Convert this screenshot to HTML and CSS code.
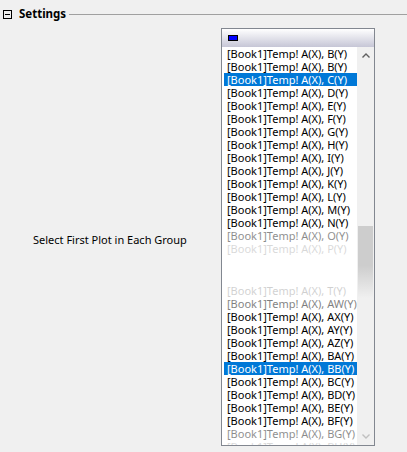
FILE: index.html
```html
<!DOCTYPE html>
<html>
<head>
<meta charset="utf-8">
<link rel="stylesheet" href="styles.css">
</head>
<body>
<div class="page">
  <div class="section-head">
    <span class="collapse-icon"><span class="minus"></span></span>
    <span class="section-title">Settings</span>
    <span class="section-line"></span>
  </div>
  <div class="section-body">
    <div class="field-label">Select First Plot in Each Group</div>
    <div class="listbox">
      <div class="list-header"><span class="swatch"></span></div>
      <div class="list-main">
        <div class="list-rows">
          <div class="row">[Book1]Temp! A(X), B(Y)</div>
          <div class="row">[Book1]Temp! A(X), B(Y)</div>
          <div class="row selected">[Book1]Temp! A(X), C(Y)</div>
          <div class="row">[Book1]Temp! A(X), D(Y)</div>
          <div class="row">[Book1]Temp! A(X), E(Y)</div>
          <div class="row">[Book1]Temp! A(X), F(Y)</div>
          <div class="row">[Book1]Temp! A(X), G(Y)</div>
          <div class="row">[Book1]Temp! A(X), H(Y)</div>
          <div class="row">[Book1]Temp! A(X), I(Y)</div>
          <div class="row">[Book1]Temp! A(X), J(Y)</div>
          <div class="row">[Book1]Temp! A(X), K(Y)</div>
          <div class="row">[Book1]Temp! A(X), L(Y)</div>
          <div class="row">[Book1]Temp! A(X), M(Y)</div>
          <div class="row">[Book1]Temp! A(X), N(Y)</div>
          <div class="row fade-1">[Book1]Temp! A(X), O(Y)</div>
          <div class="row fade-2">[Book1]Temp! A(X), P(Y)</div>
          <div class="row-gap"></div>
          <div class="row fade-3">[Book1]Temp! A(X), T(Y)</div>
          <div class="row fade-4">[Book1]Temp! A(X), AW(Y)</div>
          <div class="row">[Book1]Temp! A(X), AX(Y)</div>
          <div class="row">[Book1]Temp! A(X), AY(Y)</div>
          <div class="row">[Book1]Temp! A(X), AZ(Y)</div>
          <div class="row">[Book1]Temp! A(X), BA(Y)</div>
          <div class="row selected">[Book1]Temp! A(X), BB(Y)</div>
          <div class="row">[Book1]Temp! A(X), BC(Y)</div>
          <div class="row">[Book1]Temp! A(X), BD(Y)</div>
          <div class="row">[Book1]Temp! A(X), BE(Y)</div>
          <div class="row">[Book1]Temp! A(X), BF(Y)</div>
          <div class="row fade-1">[Book1]Temp! A(X), BG(Y)</div>
          <div class="row fade-2">[Book1]Temp! A(X), BH(Y)</div>
        </div>
        <div class="scrollbar">
          <div class="sb-btn">
            <svg width="8" height="5" viewBox="0 0 8 5"><path d="M0.5 4.5 L4 1 L7.5 4.5" fill="none" stroke="#606060" stroke-width="1.4"/></svg>
          </div>
          <div class="sb-track"><div class="sb-thumb"></div></div>
          <div class="sb-btn">
            <svg width="8" height="5" viewBox="0 0 8 5"><path d="M0.5 0.5 L4 4 L7.5 0.5" fill="none" stroke="#c0c0c0" stroke-width="1.4"/></svg>
          </div>
        </div>
      </div>
    </div>
  </div>
</div>
</body>
</html>
```

FILE: styles.css
```css
html, body {
  margin: 0;
  padding: 0;
  background: #f0f0f0;
}
.page {
  width: 407px;
  height: 452px;
  overflow: hidden;
  font-family: "Noto Sans", "Open Sans", sans-serif;
  font-size: 11px;
  color: #000;
}
.section-head {
  display: flex;
  align-items: center;
  height: 14px;
  padding-top: 7px;
  padding-left: 3px;
}
.collapse-icon {
  width: 7px;
  height: 7px;
  border: 1px solid #000;
  display: flex;
  align-items: center;
  justify-content: center;
  background: #f0f0f0;
}
.minus {
  width: 5px;
  height: 1px;
  background: #000;
}
.section-title {
  font-weight: bold;
  font-size: 11.5px;
  margin-left: 7px;
  line-height: 14px;
}
.section-line {
  flex: 1;
  height: 1px;
  background: #a0a0a0;
  margin-left: 3px;
}
.section-body {
  display: flex;
  align-items: center;
  margin-top: 7px;
}
.field-label {
  width: 188px;
  padding-left: 33px;
  padding-top: 6px;
  line-height: 14px;
}
.listbox {
  width: 152px;
  height: 416px;
  border: 1px solid #828790;
  background: #fff;
  display: flex;
  flex-direction: column;
  overflow: hidden;
}
.list-header {
  height: 18px;
  flex: none;
  background: linear-gradient(#ffffff, #c6c6d6);
  display: flex;
  align-items: center;
  padding-left: 6px;
}
.swatch {
  width: 8px;
  height: 4px;
  background: #0000ff;
  border: 1px solid #000;
}
.list-main {
  flex: 1;
  display: flex;
  overflow: hidden;
}
.list-rows {
  flex: 1;
  padding-left: 2px;
  overflow: hidden;
}
.row {
  height: 13px;
  line-height: 13px;
  padding-left: 3px;
  white-space: nowrap;
  overflow: hidden;
}
.row.selected {
  background: #0078d7;
  color: #fff;
}
.row-gap {
  height: 29px;
}
.fade-1 { opacity: 0.45; }
.fade-2 { opacity: 0.15; }
.fade-3 { opacity: 0.18; }
.fade-4 { opacity: 0.5; }
.scrollbar {
  width: 17px;
  flex: none;
  background: #f0f0f0;
  display: flex;
  flex-direction: column;
}
.sb-btn {
  height: 17px;
  flex: none;
  display: flex;
  align-items: center;
  justify-content: center;
}
.sb-track {
  flex: 1;
  padding-left: 1px;
}
.sb-thumb {
  width: 15px;
  height: 72px;
  margin-top: 162px;
  background: linear-gradient(#cdcdcd 0%, #cdcdcd 55%, rgba(205,205,205,0) 100%);
}
```
